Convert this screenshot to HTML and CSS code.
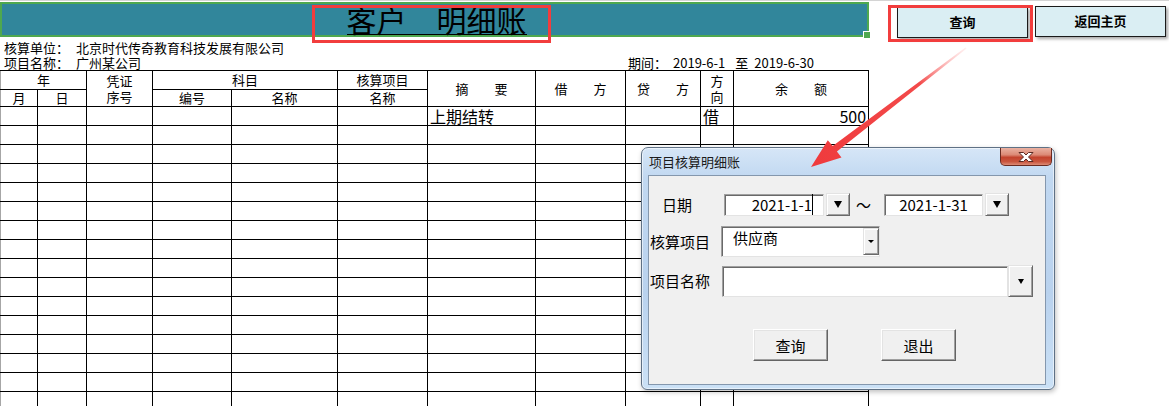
FILE: index.html
```html
<!DOCTYPE html>
<html lang="zh-CN">
<head>
<meta charset="utf-8">
<title>客户明细账</title>
<link rel="stylesheet" href="styles.css">
</head>
<body>
<div class="grid-strip"></div>
<div class="sheet">
  <div class="title-bar"><span class="title">客户　明细账</span></div>
  <div class="info">
    <div class="info-row"><span class="lbl">核算单位：</span><span>北京时代传奇教育科技发展有限公司</span></div>
    <div class="info-row"><div class="left"><span class="lbl">项目名称：</span><span>广州某公司</span></div><span class="per-lbl">期间：</span><span class="d1">2019-6-1</span><span class="zhi">至</span><span class="d2">2019-6-30</span></div>
  </div>
  <table class="ledger">
    <colgroup>
      <col class="c1"><col class="c2"><col class="c3"><col class="c4"><col class="c5"><col class="c6"><col class="c7"><col class="c8"><col class="c9"><col class="c10"><col class="c11">
    </colgroup>
    <thead>
      <tr class="h1">
        <th colspan="2">年</th>
        <th rowspan="2" class="two">凭证<br>序号</th>
        <th colspan="2">科目</th>
        <th>核算项目</th>
        <th rowspan="2">摘　　要</th>
        <th rowspan="2">借　　方</th>
        <th rowspan="2">贷　　方</th>
        <th rowspan="2" class="two">方<br>向</th>
        <th rowspan="2">余　　额</th>
      </tr>
      <tr class="h2">
        <th>月</th><th>日</th><th>编号</th><th>名称</th><th>名称</th>
      </tr>
    </thead>
    <tbody>
      <tr><td></td><td></td><td></td><td></td><td></td><td></td><td class="big">上期结转</td><td></td><td></td><td class="big">借</td><td class="big num">500</td></tr>
      <tr><td></td><td></td><td></td><td></td><td></td><td></td><td></td><td></td><td></td><td></td><td></td></tr>
      <tr><td></td><td></td><td></td><td></td><td></td><td></td><td></td><td></td><td></td><td></td><td></td></tr>
      <tr><td></td><td></td><td></td><td></td><td></td><td></td><td></td><td></td><td></td><td></td><td></td></tr>
      <tr><td></td><td></td><td></td><td></td><td></td><td></td><td></td><td></td><td></td><td></td><td></td></tr>
      <tr><td></td><td></td><td></td><td></td><td></td><td></td><td></td><td></td><td></td><td></td><td></td></tr>
      <tr><td></td><td></td><td></td><td></td><td></td><td></td><td></td><td></td><td></td><td></td><td></td></tr>
      <tr><td></td><td></td><td></td><td></td><td></td><td></td><td></td><td></td><td></td><td></td><td></td></tr>
      <tr><td></td><td></td><td></td><td></td><td></td><td></td><td></td><td></td><td></td><td></td><td></td></tr>
      <tr><td></td><td></td><td></td><td></td><td></td><td></td><td></td><td></td><td></td><td></td><td></td></tr>
      <tr><td></td><td></td><td></td><td></td><td></td><td></td><td></td><td></td><td></td><td></td><td></td></tr>
      <tr><td></td><td></td><td></td><td></td><td></td><td></td><td></td><td></td><td></td><td></td><td></td></tr>
      <tr><td></td><td></td><td></td><td></td><td></td><td></td><td></td><td></td><td></td><td></td><td></td></tr>
      <tr><td></td><td></td><td></td><td></td><td></td><td></td><td></td><td></td><td></td><td></td><td></td></tr>
      <tr><td></td><td></td><td></td><td></td><td></td><td></td><td></td><td></td><td></td><td></td><td></td></tr>
      <tr><td></td><td></td><td></td><td></td><td></td><td></td><td></td><td></td><td></td><td></td><td></td></tr>
    </tbody>
  </table>
</div>

<div class="sheet-tools">
  <div class="shape-btn">查询</div>
  <div class="shape-btn">返回主页</div>
</div>

<div class="dialog">
  <div class="dlg-title">
    <span>项目核算明细账</span>
    <div class="close">
      <svg width="20" height="12" viewBox="0 0 20 12"><path d="M3 1.5 L7.5 1.5 L10 4 L12.5 1.5 L17 1.5 L12.5 6 L17 10.5 L12.5 10.5 L10 8 L7.5 10.5 L3 10.5 L7.5 6 Z" fill="#fff" stroke="#5a2a22" stroke-width="1" stroke-linejoin="round"/></svg>
    </div>
  </div>
  <div class="dlg-body">
    <div class="frow r1">
      <span class="lab lab-date">日期</span>
      <div class="field date1"><span class="caret">2021-1-1</span></div>
      <div class="drop big-drop"><i class="tri"></i></div>
      <span class="tilde">～</span>
      <div class="field date2">2021-1-31</div>
      <div class="drop big-drop"><i class="tri"></i></div>
    </div>
    <div class="frow r2">
      <span class="lab lab-kind">核算项目</span>
      <div class="field combo"><span class="combo-text">供应商</span><div class="drop small-drop"><i class="tri tri-s"></i></div></div>
    </div>
    <div class="frow r3">
      <span class="lab lab-name">项目名称</span>
      <div class="field name"></div>
      <div class="drop name-drop"><i class="tri tri-m"></i></div>
    </div>
    <div class="frow r4">
      <div class="cmd cmd1">查询</div>
      <div class="cmd cmd2">退出</div>
    </div>
  </div>
</div>

<div class="mark mark-title"></div>
<div class="mark mark-btn"></div>

<svg class="arrow" width="1169" height="406" viewBox="0 0 1169 406">
  <defs>
    <linearGradient id="ag" gradientUnits="userSpaceOnUse" x1="966" y1="48" x2="811" y2="167">
      <stop offset="0" stop-color="#ffb0b0" stop-opacity="0.2"/>
      <stop offset="0.3" stop-color="#f34a4a"/>
      <stop offset="1" stop-color="#ef3a3d"/>
    </linearGradient>
  </defs>
  <polygon points="966.6,48.6 836.9,151.5 841.5,157.4 811,167 827.8,140.2 832.7,145.9 965.4,47.4" fill="url(#ag)"/>
</svg>
</body>
</html>
```

FILE: styles.css
```css
* { box-sizing: border-box; }
html, body { margin: 0; padding: 0; }
body {
  width: 1169px;
  height: 406px;
  overflow: hidden;
  position: relative;
  background: #fff;
  color: #000;
  font-family: "Noto Sans CJK SC", "Noto Sans", sans-serif;
}

.grid-strip {
  height: 1px;
  background: #d4d4d4;
}

.sheet { width: 869px; }

.title-bar {
  position: relative;
  margin-top: 1px;
  height: 35px;
  border: 2px solid #4fa84f;
  background: #31869b;
  display: flex;
  justify-content: center;
  align-items: flex-end;
}
.title-bar::after {
  content: "";
  position: absolute;
  right: -4px;
  bottom: -4px;
  width: 6px;
  height: 6px;
  background: #4fa84f;
  border: 1px solid #fff;
}
.title {
  display: block;
  font-size: 30px;
  line-height: 30px;
  height: 31px;
  color: #000;
  border-bottom: 1px solid #000;
  margin-left: 4px;
  white-space: nowrap;
}

.info {
  margin-top: 3px;
  font-size: 13px;
  line-height: 15px;
  padding-left: 4px;
}
.info-row { display: flex; height: 15px; white-space: nowrap; }
.info-row .lbl { width: 72px; }
.info-row .left { width: 624px; display: flex; }
.per-lbl { width: 45px; }
.zhi { margin: 0 6px 0 10px; }

.ledger {
  border-collapse: collapse;
  table-layout: fixed;
  width: 868px;
}
.ledger col.c1 { width: 37px; }
.ledger col.c2 { width: 49px; }
.ledger col.c3 { width: 66px; }
.ledger col.c4 { width: 79px; }
.ledger col.c5 { width: 106px; }
.ledger col.c6 { width: 90px; }
.ledger col.c7 { width: 108px; }
.ledger col.c8 { width: 90px; }
.ledger col.c9 { width: 75px; }
.ledger col.c10 { width: 33px; }
.ledger col.c11 { width: 135px; }

.ledger th, .ledger td {
  border: 1px solid #000;
  padding: 0;
  font-weight: normal;
  font-size: 13px;
  line-height: 16px;
  text-align: center;
  vertical-align: middle;
  white-space: nowrap;
}
.ledger tr > :first-child { border-left-color: #a6a6a6; }
.ledger tr.h1 { height: 19px; }
.ledger tr.h2 { height: 16px; }
.ledger tbody tr { height: 19px; }
.ledger td.big {
  font-size: 16px;
  line-height: 17px;
  height: 19px;
  text-align: left;
  vertical-align: bottom;
  padding-left: 2px;
}
.ledger td.num { text-align: right; padding-right: 2px; }

/* floating sheet buttons */
.sheet-tools {
  position: absolute;
  left: 897px;
  top: 6px;
  display: flex;
  align-items: flex-start;
  gap: 7px;
}
.shape-btn {
  width: 131px;
  height: 31px;
  background: #daeef3;
  border: 1px solid #1a1a1a;
  box-shadow: 2px 2px 3px rgba(0,0,0,0.35);
  font-size: 13px;
  font-weight: bold;
  display: flex;
  align-items: center;
  justify-content: center;
  padding-bottom: 3px;
}
.shape-btn:first-child { margin-top: 1px; }

/* dialog */
.dialog {
  position: absolute;
  left: 641px;
  top: 147px;
  width: 414px;
  height: 243px;
  border: 1px solid #5f7185;
  border-radius: 7px 7px 6px 6px;
  background: linear-gradient(to bottom, #d6e6f7 0, #c1d8f1 30px, #b9d2ee 60%, #cbe1f6 100%);
  box-shadow: inset 0 0 0 1px rgba(255,255,255,0.55), 1px 2px 5px rgba(0,0,0,0.25);
  display: flex;
  flex-direction: column;
}
.dlg-title {
  height: 27px;
  display: flex;
  align-items: flex-start;
  padding: 0 2px 0 7px;
}
.dlg-title span {
  font-size: 13px;
  line-height: 16px;
  margin-top: 6px;
  color: #1b1b1b;
}
.close {
  margin-left: auto;
  width: 52px;
  height: 18px;
  border: 1px solid #6a2b21;
  border-top: none;
  border-radius: 0 0 5px 5px;
  background: linear-gradient(to bottom, #eab1a2 0, #dc8a76 40%, #c3432d 55%, #c9553e 80%, #dc8b75 100%);
  display: flex;
  align-items: center;
  justify-content: center;
}
.close svg { display: block; }

.dlg-body {
  margin: 0 8px 4px 6px;
  height: 210px;
  border: 1px solid #8497ad;
  background: #f0f0f0;
  padding: 17px 0 0 0;
  display: flex;
  flex-direction: column;
  font-size: 15px;
}
.frow { display: flex; align-items: center; }
.lab { line-height: 18px; white-space: nowrap; }

.field {
  background: #fff;
  border-top: 1px solid #a0a0a0;
  border-left: 1px solid #a0a0a0;
  border-bottom: 1px solid #e3e3e3;
  border-right: 1px solid #e3e3e3;
  box-shadow: inset 1px 1px 0 #696969;
}
.drop {
  background: #f0f0f0;
  border-top: 1px solid #e3e3e3;
  border-left: 1px solid #e3e3e3;
  border-bottom: 1px solid #696969;
  border-right: 1px solid #696969;
  box-shadow: inset 1px 1px 0 #fff, inset -1px -1px 0 #a0a0a0;
  display: flex;
  align-items: center;
  justify-content: center;
}
.tri {
  display: block;
  width: 0;
  height: 0;
  border-left: 4px solid transparent;
  border-right: 4px solid transparent;
  border-top: 7px solid #000;
}
.tri-s {
  border-left-width: 3px;
  border-right-width: 3px;
  border-top-width: 3px;
}
.tri-m {
  border-left-width: 3px;
  border-right-width: 3px;
  border-top-width: 5px;
}

.r1 { height: 23px; }
.lab-date { margin-left: 13px; width: 62px; }
.date1, .date2 {
  height: 22px;
  font-size: 15px;
  line-height: 20px;
  white-space: nowrap;
}
.date1 { width: 100px; text-align: right; padding-right: 10px; }
.date2 { width: 99px; text-align: center; }
.caret { border-right: 1px solid #000; padding-right: 0; }
.big-drop { width: 24px; height: 23px; margin-left: 2px; }
.tilde { width: 34px; padding-left: 6px; font-size: 15px; }

.r2 { height: 31px; margin-top: 10px; }
.lab-kind { margin-left: 1px; width: 71px; }
.combo {
  width: 159px;
  height: 31px;
  display: flex;
  justify-content: space-between;
  align-items: flex-start;
}
.combo-text { margin: 2px 0 0 11px; line-height: 18px; }
.small-drop { width: 16px; height: 27px; margin: 1px 0 0 0; }

.r3 { height: 32px; margin-top: 8px; }
.lab-name { margin-left: 1px; width: 72px; }
.name { width: 286px; height: 31px; }
.name-drop { width: 25px; height: 32px; }

.r4 { margin-top: 32px; }
.cmd {
  width: 75px;
  height: 32px;
  background: #f0f0f0;
  border-top: 1px solid #fff;
  border-left: 1px solid #fff;
  border-bottom: 1px solid #646464;
  border-right: 1px solid #646464;
  box-shadow: inset -1px -1px 0 #a0a0a0, inset 1px 1px 0 #e3e3e3;
  display: flex;
  align-items: center;
  justify-content: center;
  font-size: 15px;
}
.cmd1 { margin-left: 104px; }
.cmd2 { margin-left: 53px; }

/* annotation overlays */
.mark {
  position: absolute;
  border: 3px solid #f23d3d;
}
.mark-title { left: 312px; top: 5px; width: 239px; height: 38px; }
.mark-btn { left: 888px; top: 5px; width: 145px; height: 37px; }

.arrow {
  position: absolute;
  left: 0;
  top: 0;
  pointer-events: none;
}
```
